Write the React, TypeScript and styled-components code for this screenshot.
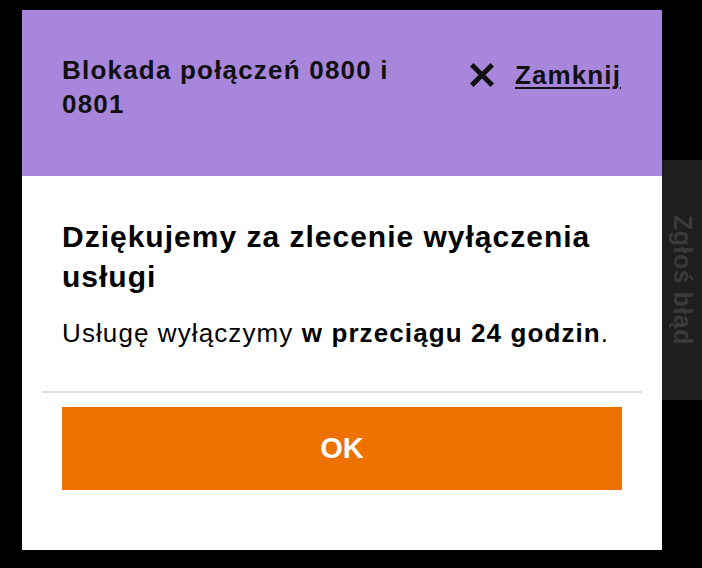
import { FC } from "react";
import styled, { createGlobalStyle } from "styled-components";

const GlobalStyle = createGlobalStyle`
  html, body {
    margin: 0;
    padding: 0;
    background: #000;
  }
  body {
    font-family: "Liberation Sans", Arial, sans-serif;
    color: #000;
  }
`;

const Overlay = styled.div`
  position: relative;
  width: 702px;
  height: 568px;
  background: #000;
  overflow: hidden;
  padding: 10px 0 0 22px;
  box-sizing: border-box;
`;

const Modal = styled.div`
  position: relative;
  z-index: 1;
  width: 640px;
  height: 540px;
  background: #fff;
  display: flex;
  flex-direction: column;
`;

const Header = styled.header`
  background: #a886db;
  height: 166px;
  box-sizing: border-box;
  padding: 43px 40px 0 40px;
  display: flex;
  align-items: flex-start;
  justify-content: space-between;
  gap: 30px;
`;

const HeaderTitle = styled.h2`
  margin: 0;
  width: 350px;
  font-size: 26px;
  line-height: 34px;
  font-weight: 700;
  letter-spacing: 1.2px;
  color: #111;
`;

const CloseButton = styled.button`
  display: flex;
  align-items: center;
  gap: 21px;
  background: none;
  border: none;
  padding: 0;
  margin: 5px 1px 0 0;
  cursor: pointer;
  font-family: inherit;
  font-size: 26px;
  line-height: 34px;
  font-weight: 700;
  letter-spacing: 1.1px;
  color: #111;
  white-space: nowrap;

  span {
    text-decoration: underline;
    text-decoration-thickness: 2px;
    text-underline-offset: 3px;
  }
`;

const Body = styled.div`
  padding: 41px 40px 0 40px;
`;

const Title = styled.h1`
  margin: 0;
  font-size: 30px;
  line-height: 40px;
  font-weight: 700;
  letter-spacing: 1px;
`;

const Text = styled.p`
  margin: 19px 0 0 0;
  font-size: 26px;
  line-height: 34px;
  letter-spacing: 1.1px;

  b {
    font-weight: 700;
  }
`;

const Divider = styled.hr`
  margin: 41px 20px 0 20px;
  border: none;
  height: 2px;
  background: #dcdcdc;
`;

const Footer = styled.div`
  padding: 14px 40px 0 40px;
`;

const OkButton = styled.button`
  width: 100%;
  height: 83px;
  border: none;
  background: #ef7100;
  color: #fff;
  font-family: inherit;
  font-size: 29px;
  font-weight: 700;
  cursor: pointer;
`;

const ReportTab = styled.div`
  position: absolute;
  right: 0;
  top: 160px;
  width: 40px;
  height: 240px;
  background: #1e1e1e;
  display: flex;
  align-items: center;
  justify-content: center;
`;

const ReportLabel = styled.span`
  writing-mode: vertical-rl;
  font-size: 25px;
  font-weight: 700;
  letter-spacing: 0.5px;
  color: #3a3a3a;
  white-space: nowrap;
`;

const CloseIcon: FC = () => (
  <svg width="24" height="24" viewBox="0 0 24 24" aria-hidden="true">
    <path d="M3.5 3.5 L20.5 20.5 M20.5 3.5 L3.5 20.5" stroke="#111" strokeWidth="5" strokeLinecap="square" fill="none" />
  </svg>
);

const App: FC = () => {
  return (
    <>
      <GlobalStyle />
      <Overlay>
        <Modal>
          <Header>
            <HeaderTitle>Blokada połączeń 0800 i 0801</HeaderTitle>
            <CloseButton>
              <CloseIcon />
              <span>Zamknij</span>
            </CloseButton>
          </Header>
          <Body>
            <Title>Dziękujemy za zlecenie wyłączenia usługi</Title>
            <Text>
              Usługę wyłączymy <b>w przeciągu 24 godzin</b>.
            </Text>
          </Body>
          <Divider />
          <Footer>
            <OkButton>OK</OkButton>
          </Footer>
        </Modal>
        <ReportTab>
          <ReportLabel>Zgłoś błąd</ReportLabel>
        </ReportTab>
      </Overlay>
    </>
  );
};

export default App;
